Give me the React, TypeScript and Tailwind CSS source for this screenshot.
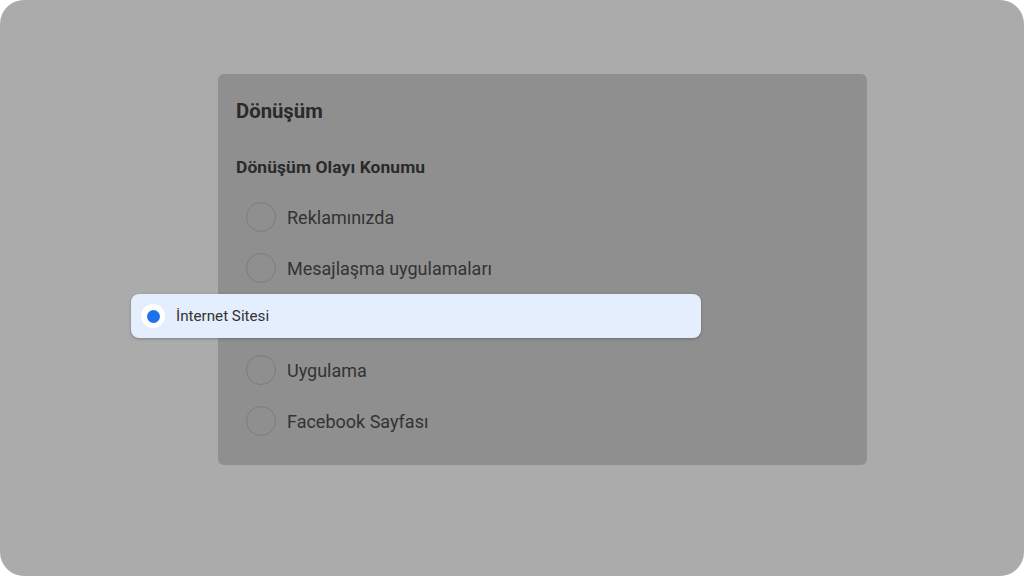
export default function App() {
  const options = [
    "Reklamınızda",
    "Mesajlaşma uygulamaları",
    "İnternet Sitesi",
    "Uygulama",
    "Facebook Sayfası",
  ];

  return (
    <div className="w-[1024px] h-[576px] bg-white font-['Roboto',sans-serif]">
      <div className="relative w-full h-full rounded-[24px] bg-[#ababab] overflow-hidden pt-[74px] pl-[218px]">
        <div className="w-[649px] h-[391px] rounded-[6px] bg-[#8f8f8f] px-[18px] pt-[23px]">
          <h1 className="text-[20.3px] leading-[28px] font-bold text-[#2a2a2a]">Dönüşüm</h1>
          <h2 className="mt-[30px] text-[17.4px] leading-[24px] font-bold text-[#2a2a2a] tracking-[0.1px]">
            Dönüşüm Olayı Konumu
          </h2>
          <div className="mt-[23px] ml-[10px] flex flex-col gap-[21px]">
            {options.map((o) => (
              <div key={o} className="flex items-center h-[30px]">
                <span className="w-[30px] h-[30px] rounded-full border-[1.5px] border-[#7c7c7c]" />
                <span className="ml-[11px] text-[18px] text-[#333333]">{o}</span>
              </div>
            ))}
          </div>
        </div>

        {/* selected option, lifted above the dimmed dialog */}
        <div className="absolute left-[131px] top-[294px] w-[570px] h-[44px] rounded-[8px] bg-[#e4eefc] shadow-[0_1px_3px_rgba(0,0,0,0.25)] flex items-center pl-[10px]">
          <span className="w-[24px] h-[24px] rounded-full bg-white flex items-center justify-center">
            <span className="w-[13px] h-[13px] rounded-full bg-[#1a73e8]" />
          </span>
          <span className="ml-[11px] text-[15.2px] text-[#333333]">İnternet Sitesi</span>
        </div>
      </div>
    </div>
  );
}
